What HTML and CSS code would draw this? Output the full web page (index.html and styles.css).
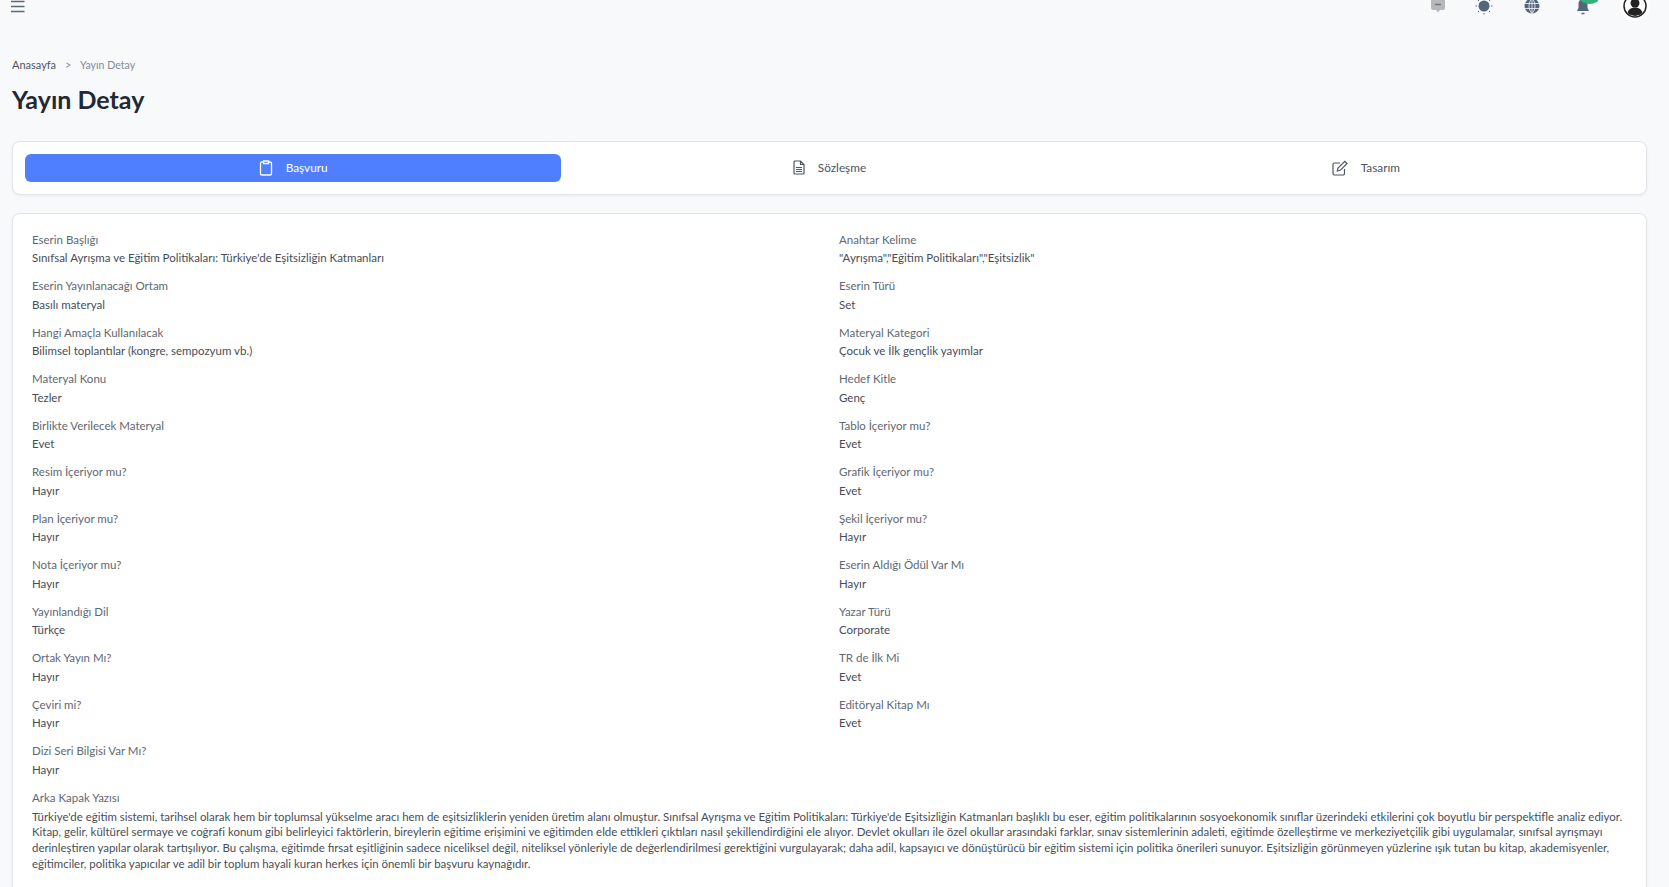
FILE: index.html
```html
<!DOCTYPE html>
<html lang="tr">
<head>
<meta charset="utf-8">
<title>Yayın Detay</title>
<link rel="stylesheet" href="styles.css">
</head>
<body>
<header class="topbar">
  <svg class="menu" width="14" height="14" viewBox="0 0 14 14"><path d="M0 1.500h13.500M0 6.500h13.500M0 11.500h13.500" stroke="#5b6b7c" stroke-width="1.300" fill="none"/></svg>
  <div class="top-icons">
    <svg class="ti ti-chat" width="16" height="16" viewBox="0 0 16 16"><path d="M3 1h10a2 2 0 0 1 2 2v7a2 2 0 0 1-2 2h-3l-2 2.500-2-2.500H3a2 2 0 0 1-2-2V3a2 2 0 0 1 2-2z" fill="#b5b8bc"/><path d="M5 6.500h6" stroke="#6f7377" stroke-width="1.400"/></svg>
    <svg class="ti ti-sun" width="18" height="18" viewBox="0 0 18 18"><circle cx="9" cy="9" r="5.500" fill="#53667a"/><path d="M9 .5v1.500M9 16v1.500M.5 9H2M16 9h1.500M3 3l1 1M14 14l1 1M3 15l1-1M14 4l1-1" stroke="#53667a" stroke-width="1"/></svg>
    <svg class="ti ti-globe" width="16" height="16" viewBox="0 0 16 16"><circle cx="8" cy="8" r="7.500" fill="#53667a"/><path d="M1 5.500h14M1 10.500h14M8 .5v15M8 .5c-4 4-4 11 0 15M8 .5c4 4 4 11 0 15" stroke="#f8f9fb" stroke-width=".8" fill="none"/></svg>
    <div class="bell">
      <svg width="14" height="18" viewBox="0 0 14 18"><path d="M7 1a4.500 4.500 0 0 0-4.500 4.500V10L1 13h12l-1.500-3V5.500A4.500 4.500 0 0 0 7 1z" fill="#53667a"/><path d="M5.500 15.500h3" stroke="#53667a" stroke-width="1.500"/></svg>
      <span class="badge"></span>
    </div>
    <div class="avatar">
      <svg width="24" height="24" viewBox="0 0 24 24"><circle cx="12" cy="12" r="11" fill="#fff" stroke="#222" stroke-width="1.500"/><circle cx="12" cy="9" r="4.500" fill="#222"/><path d="M4.500 19c1-4 4-5.500 7.500-5.500s6.500 1.500 7.500 5.500a11 11 0 0 1-15 0z" fill="#222"/></svg>
    </div>
  </div>
</header>

<main class="page">
  <nav class="crumbs"><span class="crumb-home">Anasayfa</span><span class="crumb-sep">&gt;</span><span class="crumb-now">Yayın Detay</span></nav>
  <h1 class="title">Yayın Detay</h1>

  <section class="card tabs">
    <button class="tab active">
      <svg width="14" height="16" viewBox="0 0 14 16"><path d="M4 2H2.800A1.300 1.300 0 0 0 1.500 3.300v10.400A1.300 1.300 0 0 0 2.800 15h8.400a1.300 1.300 0 0 0 1.300-1.300V3.300A1.300 1.300 0 0 0 11.200 2H10M4.500 1h5v2.500h-5z" stroke="currentColor" stroke-width="1.300" fill="none"/></svg>
      <span>Başvuru</span>
    </button>
    <button class="tab">
      <svg width="12" height="15" viewBox="0 0 12 15"><path d="M1 2a1 1 0 0 1 1-1h5.500L11 4.500V13a1 1 0 0 1-1 1H2a1 1 0 0 1-1-1zM7.500 1v3.500H11M3 7.500h6M3 9.500h6M3 11.500h6" stroke="currentColor" stroke-width="1.200" fill="none"/></svg>
      <span>Sözleşme</span>
    </button>
    <button class="tab">
      <svg width="16" height="16" viewBox="0 0 16 16"><path d="M8 3H2.500A1.500 1.500 0 0 0 1 4.500v9A1.500 1.500 0 0 0 2.500 15h8.500a1.500 1.500 0 0 0 1.500-1.500V9M6 8l-.7 3 3-.7L15 3.500 12.800 1.300z" stroke="currentColor" stroke-width="1.200" fill="none"/></svg>
      <span>Tasarım</span>
    </button>
  </section>

  <section class="card details">
    <div class="grid">
      <div class="item"><div class="label">Eserin Başlığı</div><div class="value">Sınıfsal Ayrışma ve Eğitim Politikaları: Türkiye'de Eşitsizliğin Katmanları</div></div>
      <div class="item"><div class="label">Anahtar Kelime</div><div class="value">"Ayrışma","Eğitim Politikaları","Eşitsizlik"</div></div>
      <div class="item"><div class="label">Eserin Yayınlanacağı Ortam</div><div class="value">Basılı materyal</div></div>
      <div class="item"><div class="label">Eserin Türü</div><div class="value">Set</div></div>
      <div class="item"><div class="label">Hangi Amaçla Kullanılacak</div><div class="value">Bilimsel toplantılar (kongre, sempozyum vb.)</div></div>
      <div class="item"><div class="label">Materyal Kategori</div><div class="value">Çocuk ve İlk gençlik yayımlar</div></div>
      <div class="item"><div class="label">Materyal Konu</div><div class="value">Tezler</div></div>
      <div class="item"><div class="label">Hedef Kitle</div><div class="value">Genç</div></div>
      <div class="item"><div class="label">Birlikte Verilecek Materyal</div><div class="value">Evet</div></div>
      <div class="item"><div class="label">Tablo İçeriyor mu?</div><div class="value">Evet</div></div>
      <div class="item"><div class="label">Resim İçeriyor mu?</div><div class="value">Hayır</div></div>
      <div class="item"><div class="label">Grafik İçeriyor mu?</div><div class="value">Evet</div></div>
      <div class="item"><div class="label">Plan İçeriyor mu?</div><div class="value">Hayır</div></div>
      <div class="item"><div class="label">Şekil İçeriyor mu?</div><div class="value">Hayır</div></div>
      <div class="item"><div class="label">Nota İçeriyor mu?</div><div class="value">Hayır</div></div>
      <div class="item"><div class="label">Eserin Aldığı Ödül Var Mı</div><div class="value">Hayır</div></div>
      <div class="item"><div class="label">Yayınlandığı Dil</div><div class="value">Türkçe</div></div>
      <div class="item"><div class="label">Yazar Türü</div><div class="value">Corporate</div></div>
      <div class="item"><div class="label">Ortak Yayın Mı?</div><div class="value">Hayır</div></div>
      <div class="item"><div class="label">TR de İlk Mi</div><div class="value">Evet</div></div>
      <div class="item"><div class="label">Çeviri mi?</div><div class="value">Hayır</div></div>
      <div class="item"><div class="label">Editöryal Kitap Mı</div><div class="value">Evet</div></div>
      <div class="item"><div class="label">Dizi Seri Bilgisi Var Mı?</div><div class="value">Hayır</div></div>
    </div>
    <div class="item">
      <div class="label">Arka Kapak Yazısı</div>
      <div class="value long">Türkiye'de eğitim sistemi, tarihsel olarak hem bir toplumsal yükselme aracı hem de eşitsizliklerin yeniden üretim alanı olmuştur. Sınıfsal Ayrışma ve Eğitim Politikaları: Türkiye'de Eşitsizliğin Katmanları başlıklı bu eser, eğitim politikalarının sosyoekonomik sınıflar üzerindeki etkilerini çok boyutlu bir perspektifle analiz ediyor.<br>Kitap, gelir, kültürel sermaye ve coğrafi konum gibi belirleyici faktörlerin, bireylerin eğitime erişimini ve eğitimden elde ettikleri çıktıları nasıl şekillendirdiğini ele alıyor. Devlet okulları ile özel okullar arasındaki farklar, sınav sistemlerinin adaleti, eğitimde özelleştirme ve merkeziyetçilik gibi uygulamalar, sınıfsal ayrışmayı<br>derinleştiren yapılar olarak tartışılıyor. Bu çalışma, eğitimde fırsat eşitliğinin sadece niceliksel değil, niteliksel yönleriyle de değerlendirilmesi gerektiğini vurgulayarak; daha adil, kapsayıcı ve dönüştürücü bir eğitim sistemi için politika önerileri sunuyor. Eşitsizliğin görünmeyen yüzlerine ışık tutan bu kitap, akademisyenler,<br>eğitimciler, politika yapıcılar ve adil bir toplum hayali kuran herkes için önemli bir başvuru kaynağıdır.</div>
    </div>
  </section>
</main>
</body>
</html>
```
FILE: styles.css
```css
* { box-sizing: border-box; }
html, body { margin: 0; height: 100%; overflow: hidden; }
body {
  background: #f8f9fb;
  font-family: "Lato", "Noto Sans", sans-serif;
  color: #474d57;
  font-size: 11.500px;
}
.topbar {
  height: 40px;
  margin-top: -8px;
  padding: 0 19px 0 11px;
  display: flex;
  justify-content: space-between;
  align-items: flex-start;
}
.menu { margin-top: 8px; }
.top-icons { display: flex; align-items: flex-start; }
.ti { display: block; }
.ti-chat { margin-top: 6px; margin-right: 29px; }
.ti-sun { margin-top: 4.700px; margin-right: 31px; }
.ti-globe { margin-top: 5.700px; margin-right: 36px; }
.bell { position: relative; width: 14px; height: 22px; margin-top: 5.500px; margin-right: 30px; }
.bell svg { display: block; }
.badge { position: absolute; left: 4px; top: -6px; width: 19px; height: 12px; border-radius: 50%; background: #2fb37a; }
.avatar { width: 30px; height: 30px; margin-top: -1.500px; border-radius: 50%; background: #fff; display: flex; align-items: center; justify-content: center; }
.page { padding: 23.500px 22px 0 12px; }
.crumbs { display: flex; align-items: center; height: 18px; font-size: 11px; }
.crumb-home { color: #4b5563; }
.crumb-sep { margin: 0 8.500px 0 9px; color: #8b929a; font-size: 11px; }
.crumb-now { color: #858c95; font-size: 10.600px; }
.title { margin: 10px 0 27px; font-size: 25px; line-height: 30px; font-weight: 700; color: #1f2937; }
.card {
  background: #fff;
  border: 1px solid #e3e5ea;
  border-radius: 8px;
  box-shadow: 0 1px 3px rgba(0, 0, 0, .06);
}
.tabs { display: flex; padding: 12px; height: 54px; margin-bottom: 18px; }
.tab {
  flex: 1;
  height: 28px;
  border: 0;
  border-radius: 6px;
  background: transparent;
  color: #4b5563;
  font: inherit;
  font-size: 11.800px;
  display: flex;
  align-items: center;
  justify-content: center;
  gap: 13px;
}
.tab.active { background: #4f7fff; color: #fff; }
.details { padding: 17px 19px 60px; }
.grid { display: grid; grid-template-columns: 1fr 1fr; column-gap: 19px; }
.item { margin-bottom: 10px; }
.label { font-size: 11.500px; line-height: 18px; color: #606873; }
.value { font-size: 11.500px; line-height: 18px; margin-top: .5px; color: #474d57; }
.long { font-size: 11.450px; line-height: 15.800px; margin-top: 2px; white-space: nowrap; }
```
